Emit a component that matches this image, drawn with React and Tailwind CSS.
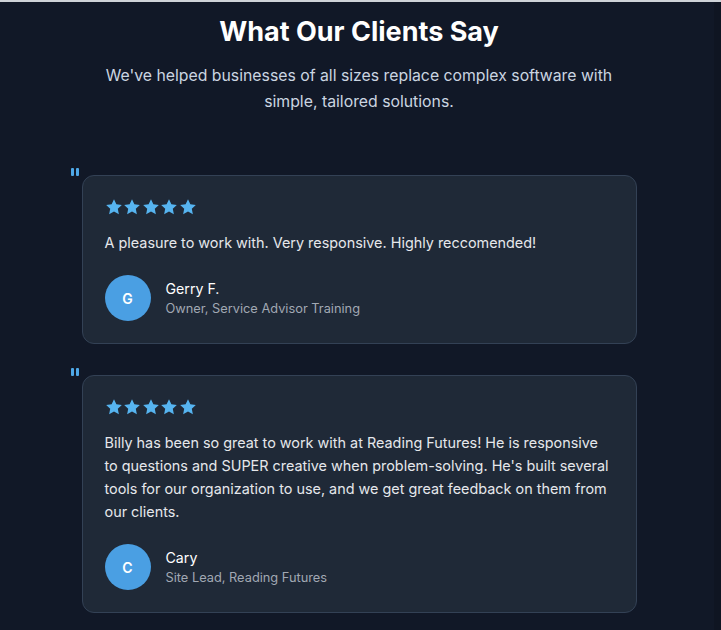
import React from "react";

const Star = () => (
  <svg width="18" height="18" viewBox="0 0 24 24" className="shrink-0">
    <path
      d="M12 1.6l3.15 6.7 7.3.9-5.4 5.05 1.45 7.25L12 18l-6.5 3.5 1.45-7.25-5.4-5.05 7.3-.9z"
      fill="#56b4f0"
    />
  </svg>
);

const Quote = () => (
  <svg width="10" height="9" viewBox="0 0 10 9" className="absolute -left-[13px] -top-[8px]">
    <rect x="1" y="0" width="3" height="8" rx="1" fill="#4ea8e8" />
    <rect x="6" y="0" width="3" height="8" rx="1" fill="#4ea8e8" />
  </svg>
);

const Card = ({ text, initial, name, role }) => (
  <div className="relative w-[555px] rounded-[12px] border border-[#334155] bg-[#1f2937] px-[22px] pt-[22px] pb-[22px]">
    <Quote />
    <div className="flex gap-[0.5px]">
      {[0, 1, 2, 3, 4].map((i) => (
        <Star key={i} />
      ))}
    </div>
    <p className="mt-[15px] text-[14.4px] leading-[23px] text-[#e5e7eb]">{text}</p>
    <div className="mt-[21px] flex items-center gap-[15px]">
      <div className="flex h-[46px] w-[46px] items-center justify-center rounded-full bg-[#4a9fe3] text-[14px] font-semibold text-white">
        {initial}
      </div>
      <div className="flex flex-col">
        <span className="text-[14.2px] leading-[21px] font-normal text-white">{name}</span>
        <span className="text-[12.8px] leading-[20px] text-[#a1a8b3]">{role}</span>
      </div>
    </div>
  </div>
);

export default function App() {
  return (
    <div
      className="relative min-h-[630px] w-full bg-[#111827]"
      style={{ fontFamily: "Inter, 'Noto Sans', sans-serif" }}
    >
      <div className="h-[2px] w-full bg-[#cfd3d8]" />
      <div className="absolute right-0 top-[2px] h-[628px] w-[7px] bg-[#0f1522]" />
      <div className="flex flex-col items-center pt-[12px] pb-[18px] pr-[3px]">
        <h2 className="text-[27px] leading-[36px] font-bold text-white">What Our Clients Say</h2>
        <p className="mt-[13px] w-[540px] text-center text-[15.8px] leading-[26px] text-[#cbd5e1]">
          We've helped businesses of all sizes replace complex software with simple, tailored solutions.
        </p>
        <div className="mt-[60px] flex flex-col gap-[31px]">
          <Card
            text="A pleasure to work with. Very responsive. Highly reccomended!"
            initial="G"
            name="Gerry F."
            role="Owner, Service Advisor Training"
          />
          <Card
            text="Billy has been so great to work with at Reading Futures! He is responsive to questions and SUPER creative when problem-solving. He's built several tools for our organization to use, and we get great feedback on them from our clients."
            initial="C"
            name="Cary"
            role="Site Lead, Reading Futures"
          />
        </div>
      </div>
    </div>
  );
}
